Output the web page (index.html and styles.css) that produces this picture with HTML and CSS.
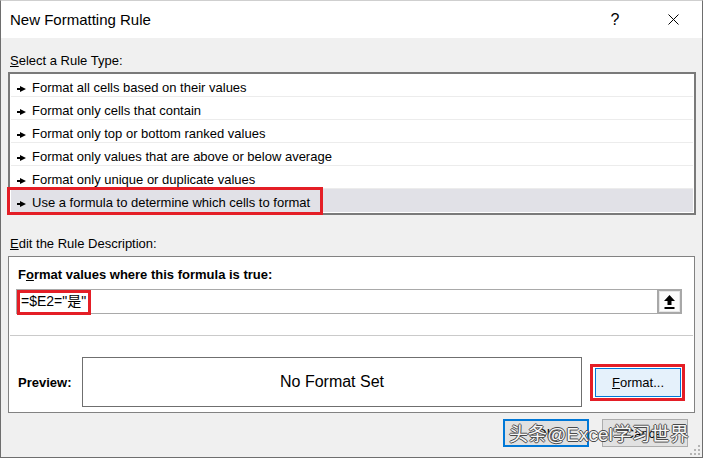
FILE: index.html
```html
<!DOCTYPE html>
<html>
<head>
<meta charset="utf-8">
<link rel="stylesheet" href="styles.css">
</head>
<body>
<div class="dialog">
  <div class="titlebar">
    <div class="title">New Formatting Rule</div>
    <div class="tb-btn help">?</div>
    <div class="tb-btn close"><svg width="11" height="11" viewBox="0 0 11 11"><path d="M0.5 0.5 L10.5 10.5 M10.5 0.5 L0.5 10.5" stroke="#000" stroke-width="1" fill="none"/></svg></div>
  </div>
  <div class="content">
    <div class="label"><u>S</u>elect a Rule Type:</div>
    <div class="list">
      <div class="row"><svg class="arrow" width="9" height="6" viewBox="0 0 9 6"><path d="M0 2 H3 V0 L9 3 L3 6 V4 H0 Z" fill="#000"/></svg>Format all cells based on their values</div>
      <div class="row"><svg class="arrow" width="9" height="6" viewBox="0 0 9 6"><path d="M0 2 H3 V0 L9 3 L3 6 V4 H0 Z" fill="#000"/></svg>Format only cells that contain</div>
      <div class="row"><svg class="arrow" width="9" height="6" viewBox="0 0 9 6"><path d="M0 2 H3 V0 L9 3 L3 6 V4 H0 Z" fill="#000"/></svg>Format only top or bottom ranked values</div>
      <div class="row"><svg class="arrow" width="9" height="6" viewBox="0 0 9 6"><path d="M0 2 H3 V0 L9 3 L3 6 V4 H0 Z" fill="#000"/></svg>Format only values that are above or below average</div>
      <div class="row"><svg class="arrow" width="9" height="6" viewBox="0 0 9 6"><path d="M0 2 H3 V0 L9 3 L3 6 V4 H0 Z" fill="#000"/></svg>Format only unique or duplicate values</div>
      <div class="row selected"><svg class="arrow" width="9" height="6" viewBox="0 0 9 6"><path d="M0 2 H3 V0 L9 3 L3 6 V4 H0 Z" fill="#000"/></svg>Use a formula to determine which cells to format</div>
      <div class="hl hl-rule"></div>
    </div>
    <div class="label label2"><u>E</u>dit the Rule Description:</div>
    <div class="panel">
      <div class="panel-title">F<u>o</u>rmat values where this formula is true:</div>
      <div class="formula">
        <span class="formula-text">=$E2="是"</span>
        <div class="ref-btn"><svg width="11" height="14" viewBox="0 0 11 14"><path d="M5.5 0 L11 6 H7.5 V10 H3.5 V6 H0 Z" fill="#000"/><rect x="0.5" y="12" width="10" height="2" fill="#000"/></svg></div>
        <div class="hl hl-formula"></div>
      </div>
      <div class="sep"></div>
      <div class="preview-row">
        <div class="preview-label">Preview:</div>
        <div class="preview-box">No Format Set</div>
        <div class="format-btn"><u>F</u>ormat...<div class="hl hl-format"></div></div>
      </div>
    </div>
    <div class="footer">
      <div class="btn default">OK</div>
      <div class="btn">Cancel</div>
    </div>
  </div>
  <div class="watermark">头条@Excel学习世界</div>
  <svg class="grip" width="10" height="10" viewBox="0 0 10 10"><g fill="#b4b4b4"><rect x="8" y="0" width="2" height="2"/><rect x="4" y="4" width="2" height="2"/><rect x="8" y="4" width="2" height="2"/><rect x="0" y="8" width="2" height="2"/><rect x="4" y="8" width="2" height="2"/><rect x="8" y="8" width="2" height="2"/></g></svg>
</div>
</body>
</html>
```
FILE: styles.css
```css
html, body {
  margin: 0;
  padding: 0;
  background: #f0f0f0;
}
.dialog {
  position: relative;
  width: 703px;
  height: 458px;
  box-sizing: border-box;
  border: 1px solid #6e6e6e;
  border-top-color: #cfcfcf;
  background: #f0f0f0;
  font-family: "Liberation Sans", Arial, sans-serif;
  font-size: 13px;
  color: #000;
  overflow: hidden;
}
.titlebar {
  height: 37px;
  background: #fff;
  display: flex;
  align-items: center;
  padding-left: 9px;
}
.title {
  flex: 1;
  font-size: 15px;
}
.tb-btn {
  width: 46px;
  height: 37px;
  display: flex;
  align-items: center;
  justify-content: center;
  font-size: 16px;
}
.help {
  margin-right: 12px;
}
.close {
  margin-right: 6px;
}
.content {
  padding: 0 6px 0 7px;
}
.label {
  padding: 15px 0 3px 2px;
  line-height: 16px;
}
.label2 {
  padding-top: 21px;
  padding-bottom: 4px;
}
.list {
  position: relative;
  height: 143px;
  box-sizing: border-box;
  border: 2px solid #7a7a7a;
  background: #fff;
  padding: 0 1px 1px 1px;
}
.row {
  padding: 6px 0 0 6px;
  height: 16px;
  line-height: 16px;
  border-bottom: 1px solid #ececec;
  white-space: nowrap;
}
.row.selected {
  background: #e1e1e7;
  border-bottom-color: #e1e1e7;
}
.arrow {
  vertical-align: middle;
  margin-right: 6px;
}
.hl {
  position: absolute;
  box-sizing: border-box;
  border: 3px solid #e41e26;
}
.hl-rule {
  left: -3px;
  top: 113px;
  width: 316px;
  height: 28px;
}
.panel {
  background: #fff;
  border: 1px solid #828282;
  margin-right: 1px;
  padding-bottom: 5px;
}
.panel-title {
  font-weight: bold;
  padding: 10px 0 0 9px;
  line-height: 16px;
}
.formula {
  position: relative;
  margin: 6px 12px 0 7px;
  height: 25px;
  box-sizing: border-box;
  border: 1px solid #a9a9a9;
  display: flex;
}
.formula-text {
  flex: 1;
  padding-left: 4px;
  line-height: 23px;
  font-size: 14px;
  font-family: "Liberation Sans", "Noto Sans CJK SC", sans-serif;
}
.ref-btn {
  width: 25px;
  height: 25px;
  margin: -1px -1px -1px 0;
  box-sizing: border-box;
  border: 2px solid #a8a8a8;
  background: #fbfbfb;
  box-shadow: inset 0 0 0 1px #e6e6e6;
  display: flex;
  align-items: center;
  justify-content: center;
}
.hl-formula {
  left: 0;
  top: 0;
  width: 74px;
  height: 25px;
}
.sep {
  margin: 21px 1px 0 1px;
  height: 1px;
  background: #cacaca;
}
.preview-row {
  margin-top: 21px;
  padding-left: 9px;
  height: 50px;
  display: flex;
  align-items: center;
}
.preview-label {
  flex: 0 0 64px;
  font-weight: bold;
}
.preview-box {
  width: 500px;
  height: 50px;
  box-sizing: border-box;
  border: 1px solid #6f6f6f;
  display: flex;
  align-items: center;
  justify-content: center;
  font-size: 16px;
}
.format-btn {
  position: relative;
  margin-left: 13px;
  width: 86px;
  height: 29px;
  box-sizing: border-box;
  border: 1px solid #0078d7;
  background: #e5f1fb;
  display: flex;
  align-items: center;
  justify-content: center;
}
.hl-format {
  left: -6px;
  top: -5px;
  width: 95px;
  height: 37px;
}
.footer {
  margin: 6px 8px 0 0;
  display: flex;
  justify-content: flex-end;
  gap: 13px;
}
.btn {
  width: 86px;
  height: 28px;
  box-sizing: border-box;
  border: 1px solid #adadad;
  background: #e1e1e1;
  display: flex;
  align-items: center;
  justify-content: center;
}
.btn.default {
  border: 2px solid #0078d7;
}
.watermark {
  position: absolute;
  left: 508px;
  top: 422px;
  font-family: "Liberation Sans", "Noto Sans CJK SC", sans-serif;
  font-size: 19px;
  line-height: 24px;
  color: #f6f6f6;
  text-shadow: -1px 0 #4a4a4a, 1px 0 #4a4a4a, 0 -1px #4a4a4a, 0 1px #4a4a4a;
  white-space: nowrap;
}
.grip {
  position: absolute;
  right: 2px;
  bottom: 2px;
}
```
